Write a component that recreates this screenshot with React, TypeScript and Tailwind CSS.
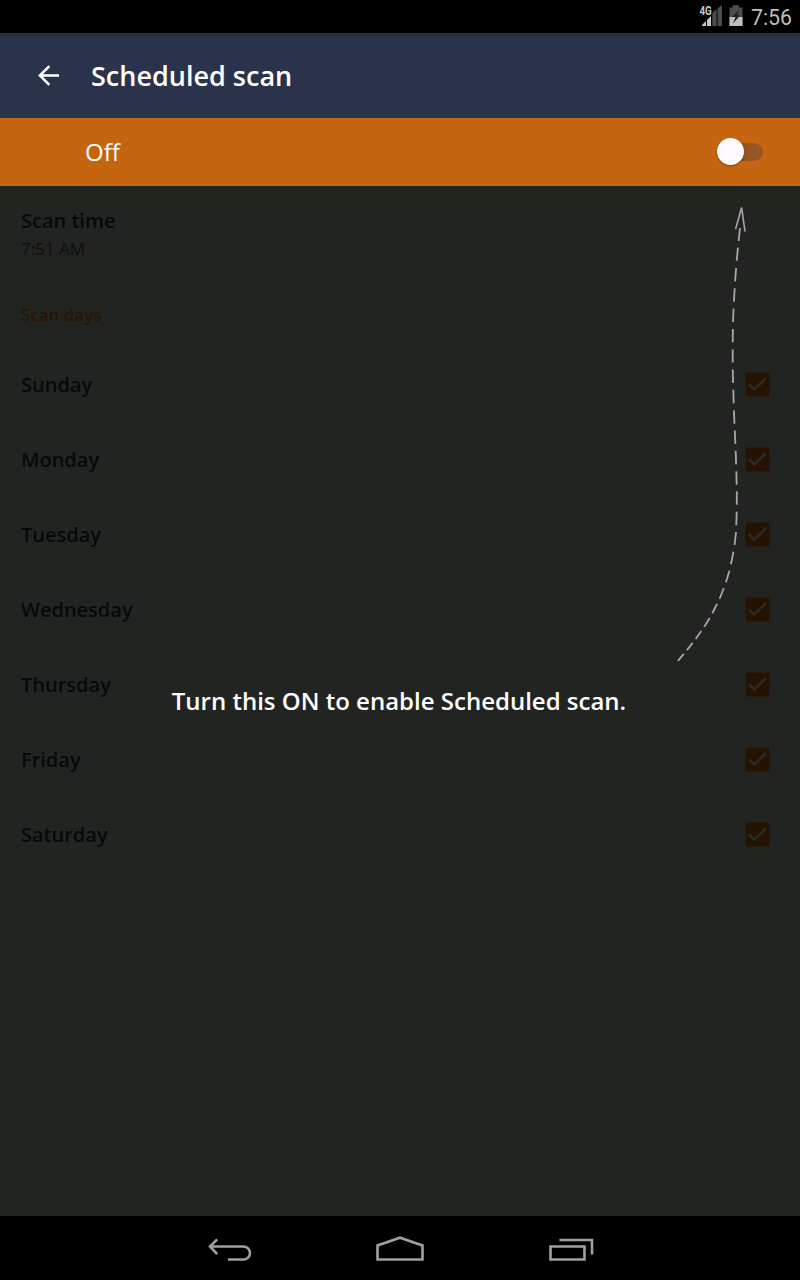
const days = ['Sunday', 'Monday', 'Tuesday', 'Wednesday', 'Thursday', 'Friday', 'Saturday'];

// Centres of the dashes along the arrow, from its head to its tail.
const dashCentres = [
  [739.3, 234.5], [737.3, 254.3], [735.6, 274.7], [734.3, 295], [733.3, 315.300], [732.8, 335.600],
  [732.7, 355.900], [732.900, 376.200], [733.500, 396.500], [734.200, 416.900], [735.100, 437.200],
  [735.900, 457.500], [736.500, 478], [736.800, 498], [736.500, 518.500], [735.300, 538.500],
  [732.200, 558], [727.700, 576.500], [721.700, 593.500], [714.700, 608.500], [707, 622.300],
  [698.500, 635], [689.800, 646.500], [680.900, 657.300],
];

const dashes = dashCentres.map(([x, y], i) => {
  const prev = dashCentres[Math.max(i - 1, 0)];
  const next = dashCentres[Math.min(i + 1, dashCentres.length - 1)];
  const spans = i === 0 || i === dashCentres.length - 1 ? 1 : 2;
  const dx = ((next[0] - prev[0]) / spans) * 0.33;
  const dy = ((next[1] - prev[1]) / spans) * 0.33;
  return { x1: x - dx, y1: y - dy, x2: x + dx, y2: y + dy };
});

function StatusBar() {
  return (
    <header className="flex h-[33px] shrink-0 items-start justify-end bg-black pr-2">
      <svg className="h-[33px] w-[50px] shrink-0" viewBox="694 0 50 33" aria-hidden="true">
        <g fill="#4b4d4b">
          <path d="M712.3 13 716.5 9v17h-4.200zM717.500 8.500 722 5V26h-4.500z" />
          <path d="M732.500 5.300h6.500v2.200h3.500v18.500h-13V7.500h3z" />
        </g>
        <path d="M702 26v-1l4-4v5zM707 20l4-4V26h-4z" fill="#c8c8c8" />
        <path d="M729.500 17h13v9h-13z" fill="#bebebe" />
        <path d="m739.500 9-7.500 8h3.500l-2.500 6.500 7.500-8.500h-3.500z" fill="#202220" />
        <text x="699.500" y="15" fill="#c8c8c8" fontFamily="Roboto, sans-serif" fontSize="12.200" fontWeight="700" textLength="12.300" lengthAdjust="spacingAndGlyphs">4G</text>
      </svg>
      <span className="ml-[7px] mt-[5px] font-['Roboto',sans-serif] text-[21.3px] leading-[25px] text-[#bebebe]">7:56</span>
    </header>
  );
}

function TitleBar() {
  return (
    <div className="flex h-[85px] shrink-0 items-center bg-[#2a334b] bg-[linear-gradient(#242c38,#2a334b_6px)] pl-[38px]">
      <svg className="h-[22px] w-[22px]" viewBox="0 0 22 22" fill="none" stroke="white" strokeWidth="2.500" aria-hidden="true">
        <path d="M21 10.500H2M11.300 1.100 1.900 10.500l9.400 9.400" />
      </svg>
      <h1 className="ml-[31px] text-[27px] font-semibold leading-9 text-white">Scheduled scan</h1>
    </div>
  );
}

function ToggleBar() {
  return (
    <div className="flex h-[68px] shrink-0 items-center justify-between bg-[#c56510] pl-[85px] pr-[37px]">
      <span className="text-[24px] leading-8 text-white">Off</span>
      <button aria-label="Scheduled scan" className="flex h-[27px] w-[47px] items-center rounded-full">
        <span className="ml-[11px] h-[18px] w-9 rounded-full bg-[#955623]" />
        <span className="-ml-[46.500px] mb-px h-[27px] w-[27px] shrink-0 rounded-full bg-[#fffaff] shadow-[0_1px_2px_rgba(0,0,0,0.35)]" />
      </button>
    </div>
  );
}

function CheckBox() {
  return (
    <svg className="h-[25px] w-[25px]" viewBox="0 0 25 25" aria-hidden="true">
      <rect x="0.500" y="0.500" width="24" height="24" rx="2.500" fill="#261200" />
      <path d="m3.800 12.300 5.500 5.200L20.800 6.300" fill="none" stroke="#2a2b27" strokeWidth="2.700" />
    </svg>
  );
}

function NavBar() {
  return (
    <nav className="flex h-16 shrink-0 items-center justify-center gap-[123px] bg-black">
      <svg className="h-[30px] w-[46px]" viewBox="206 1233 46 30" fill="none" stroke="#a0a0a0" strokeWidth="2.600" aria-hidden="true">
        <path d="M210 1246.500h33.500a6.500 6.500 0 0 1 0 13H228M217.200 1239.300l-7.200 7.200 7.200 7.700" />
      </svg>
      <svg className="h-[30px] w-[50px]" viewBox="375 1233 50 30" fill="none" stroke="#a0a0a0" strokeWidth="2.600" aria-hidden="true">
        <path d="M377.500 1259.500v-14l22.500-7.800 22.500 7.800v14z" />
      </svg>
      <svg className="h-[30px] w-[46px]" viewBox="548 1233 46 30" fill="none" stroke="#a0a0a0" strokeWidth="2.600" aria-hidden="true">
        <path d="M550.500 1246.500H584.500v13H550.500zM559.500 1240H592v14.500" />
      </svg>
    </nav>
  );
}

export default function App() {
  return (
    <div className="flex h-[1280px] w-[800px] flex-col overflow-hidden bg-[#222422] font-['Open_Sans',sans-serif]">
      <StatusBar />
      <TitleBar />
      <ToggleBar />
      <main className="relative flex-1 text-[#030a0b]">
        <section className="px-[21px] pt-[21px]">
          <h2 className="text-[20px] font-semibold leading-7">Scan time</h2>
          <p className="text-[17px] leading-7 text-[#0c0e0c]">7:51 AM</p>
          <h3 className="mt-[38px] text-[17px] font-semibold leading-7 text-[#2a1400]">Scan days</h3>
        </section>
        <ul className="mt-[18px]">
          {days.map((day) => (
            <li key={day} className="flex h-[75px] items-center justify-between pl-[21px] pr-[30px]">
              <span className="text-[20px] font-semibold leading-7">{day}</span>
              <CheckBox />
            </li>
          ))}
        </ul>
        <div className="absolute inset-0">
          <svg className="absolute left-[660px] top-0 h-[490px] w-[100px]" viewBox="660 186 100 490" fill="none" stroke="#a7a8a7" strokeWidth="1.800" aria-hidden="true">
            <path d="M735.600 229 741.600 207.500 745 231.500" strokeWidth="1.600" />
            {dashes.map((dash) => (
              <line key={dash.y1} {...dash} />
            ))}
          </svg>
          <p className="absolute inset-x-0 top-[499px] -ml-[2px] text-center text-[24px] font-semibold leading-8 text-white">Turn this ON to enable Scheduled scan.</p>
        </div>
      </main>
      <NavBar />
    </div>
  );
}
